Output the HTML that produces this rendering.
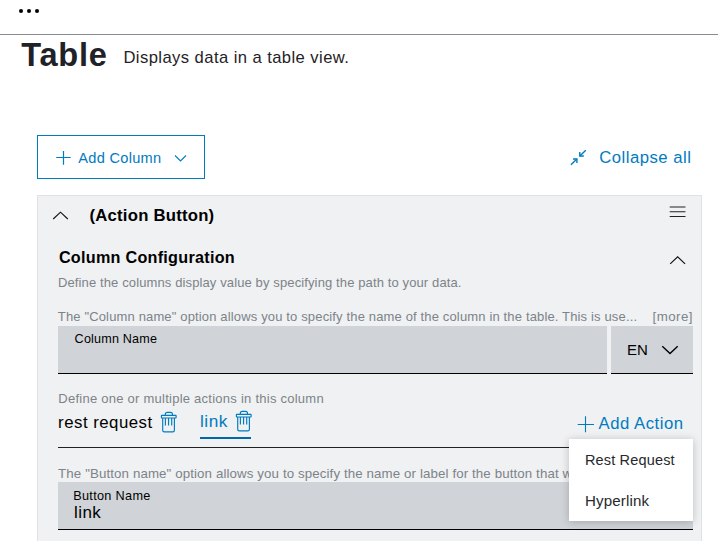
<!DOCTYPE html>
<html><head><meta charset="utf-8">
<style>
html,body{margin:0;padding:0;width:718px;height:541px;overflow:hidden;background:#fff;}
body{position:relative;font-family:"Liberation Sans",sans-serif;color:#000;}
.t{position:absolute;white-space:pre;line-height:1;}
.blue{color:#007bc0;}
.gray{color:#7d8389;}
</style></head>
<body>
<!-- top bar dots -->
<div style="position:absolute;left:19px;top:8.5px;width:4px;height:4px;border-radius:50%;background:#000"></div>
<div style="position:absolute;left:27px;top:8.5px;width:4px;height:4px;border-radius:50%;background:#000"></div>
<div style="position:absolute;left:35px;top:8.5px;width:4px;height:4px;border-radius:50%;background:#000"></div>
<div style="position:absolute;left:0;top:34px;width:718px;height:1px;background:#868c92"></div>

<div class="t" id="title" style="left:21.3px;top:39.1px;font-size:32.6px;letter-spacing:0.73px;font-weight:bold;color:#1f2227">Table</div>
<div class="t" id="desc" style="left:123.4px;top:49.7px;font-size:16.6px;letter-spacing:0.43px;color:#1f2227">Displays data in a table view.</div>

<!-- Add Column button -->
<div style="position:absolute;left:37px;top:135px;width:166px;height:42px;border:1px solid #007bc0"></div>
<svg style="position:absolute;left:56px;top:151px" width="15" height="15" viewBox="0 0 15 15"><path d="M7.5 0V13.7M0.2 6.5H14.7" stroke="#007bc0" stroke-width="1.2" fill="none"/></svg>
<div class="t blue" id="addcol" style="left:78.3px;top:150.6px;font-size:14.6px;letter-spacing:0.28px">Add Column</div>
<svg style="position:absolute;left:174px;top:154px" width="13" height="8" viewBox="0 0 13 8"><path d="M1 1.5L6.5 7L12 1.5" stroke="#007bc0" stroke-width="1.1" fill="none"/></svg>

<!-- Collapse all -->
<svg style="position:absolute;left:565px;top:145px" width="27" height="25" viewBox="0 0 27 25" fill="none" stroke="#007bc0" stroke-width="1.4">
<path d="M20.8 5.2L14.8 11"/><path d="M14.8 7V11H18.8"/>
<path d="M5.9 19.8L11.9 14"/><path d="M8 14H11.9V18"/>
</svg>
<div class="t blue" id="collapse" style="left:599.3px;top:150.2px;font-size:16.7px;letter-spacing:0.48px">Collapse all</div>

<!-- Panel -->
<div style="position:absolute;left:37px;top:195px;width:663px;height:400px;border:1px solid #dfe2e5;background:#eff1f2"></div>
<svg style="position:absolute;left:52px;top:210px" width="17" height="11" viewBox="0 0 17 11"><path d="M1.2 9L8.5 2.2L15.8 9" stroke="#111" stroke-width="1.15" fill="none"/></svg>
<div class="t" id="action" style="left:89.5px;top:207.9px;font-size:16.7px;letter-spacing:0.23px;font-weight:bold">(Action Button)</div>
<svg style="position:absolute;left:669px;top:204px" width="18" height="15" viewBox="0 0 18 15"><path d="M0.7 3H16.5M0.7 7.8H16.5M0.7 12.5H16.5" stroke="#222" stroke-width="1.1" fill="none"/></svg>

<div class="t" id="colconf" style="left:58.9px;top:249.1px;font-size:16.2px;letter-spacing:0.26px;font-weight:bold">Column Configuration</div>
<svg style="position:absolute;left:669px;top:254px" width="17" height="11" viewBox="0 0 17 11"><path d="M1.2 9.9L8.65 2.9L16.1 9.9" stroke="#111" stroke-width="1.15" fill="none"/></svg>
<div class="t gray" id="define" style="left:58px;top:275.9px;font-size:13px;letter-spacing:0.12px">Define the columns display value by specifying the path to your data.</div>
<div class="t gray" id="thecol" style="left:57.8px;top:310px;font-size:13px;letter-spacing:0.15px">The "Column name" option allows you to specify the name of the column in the table. This is use...</div>
<div class="t gray" id="more" style="left:652.6px;top:310px;font-size:13.3px;letter-spacing:0.45px">[more]</div>

<!-- Column Name input -->
<div style="position:absolute;left:58px;top:326px;width:549px;height:47px;background:#d0d4d8;border-bottom:1px solid #000"></div>
<div class="t" id="colname" style="left:74.6px;top:332.9px;font-size:12.6px;letter-spacing:0.19px">Column Name</div>
<div style="position:absolute;left:611px;top:326px;width:82px;height:47px;background:#d0d4d8;border-bottom:1px solid #000"></div>
<div class="t" id="en" style="left:627px;top:342.3px;font-size:15px">EN</div>
<svg style="position:absolute;left:661px;top:345px" width="18" height="10" viewBox="0 0 18 10"><path d="M1.3 1.2L9 8.6L16.7 1.2" stroke="#000" stroke-width="1.4" fill="none"/></svg>

<!-- actions -->
<div class="t gray" id="defone" style="left:58.3px;top:392.3px;font-size:13px;letter-spacing:0.25px">Define one or multiple actions in this column</div>
<div class="t" id="rest" style="left:58.1px;top:414.6px;font-size:16.8px;letter-spacing:0.49px">rest request</div>
<svg style="position:absolute;left:160px;top:411px" width="18" height="23" viewBox="0 0 18 23" fill="none" stroke="#007bc0" stroke-width="1.15">
<path d="M5.3 4.3V3.4Q5.3 1.4 7.3 1.4H10.5Q12.5 1.4 12.5 3.4V4.3"/>
<rect x="1.4" y="4.3" width="14.7" height="2.7" rx="0.4"/>
<path d="M2.7 7V19.3Q2.7 20.9 4.3 20.9H12.8Q14.4 20.9 14.4 19.3V7"/>
<path d="M5.4 7V14.4M8.55 7V14.4M11.7 7V14.4"/>
</svg>
<div class="t blue" id="link" style="left:199.9px;top:413.2px;font-size:17.2px;letter-spacing:0.57px">link</div>
<svg style="position:absolute;left:235.4px;top:409.7px" width="18" height="23" viewBox="0 0 18 23" fill="none" stroke="#007bc0" stroke-width="1.15">
<path d="M5.3 4.3V3.4Q5.3 1.4 7.3 1.4H10.5Q12.5 1.4 12.5 3.4V4.3"/>
<rect x="1.4" y="4.3" width="14.7" height="2.7" rx="0.4"/>
<path d="M2.7 7V19.3Q2.7 20.9 4.3 20.9H12.8Q14.4 20.9 14.4 19.3V7"/>
<path d="M5.4 7V14.4M8.55 7V14.4M11.7 7V14.4"/>
</svg>
<div style="position:absolute;left:200px;top:436.8px;width:51px;height:2.5px;background:#0068a8"></div>
<div style="position:absolute;left:58px;top:447px;width:635px;height:1px;background:#222"></div>

<svg style="position:absolute;left:577px;top:416px" width="18" height="17" viewBox="0 0 18 17"><path d="M8.5 0.2V16.3M0.7 8.5H17" stroke="#007bc0" stroke-width="1.1" fill="none"/></svg>
<div class="t blue" id="addaction" style="left:598.6px;top:416px;font-size:16.7px;letter-spacing:0.51px">Add Action</div>

<div class="t gray" id="thebtn" style="left:58.1px;top:467.3px;font-size:13.3px;letter-spacing:0.11px">The "Button name" option allows you to specify the name or label for the button that will be displayed</div>
<div style="position:absolute;left:58px;top:482px;width:635px;height:47px;background:#d0d4d8;border-bottom:1px solid #000"></div>
<div class="t" id="btnname" style="left:73.2px;top:490px;font-size:12.7px;letter-spacing:0.31px">Button Name</div>
<div class="t" id="linkval" style="left:74px;top:504px;font-size:17px;letter-spacing:0.45px">link</div>

<!-- dropdown menu -->
<div style="position:absolute;left:569px;top:439px;width:124px;height:82px;background:#fff;box-shadow:0 1px 8px rgba(0,0,0,0.22)"></div>
<div class="t" id="rest2" style="left:584.9px;top:452.7px;font-size:14.5px;letter-spacing:0.17px;color:#26292d">Rest Request</div>
<div class="t" id="hyper" style="left:584.9px;top:493.2px;font-size:15.1px;letter-spacing:0.17px;color:#26292d">Hyperlink</div>
</body></html>
